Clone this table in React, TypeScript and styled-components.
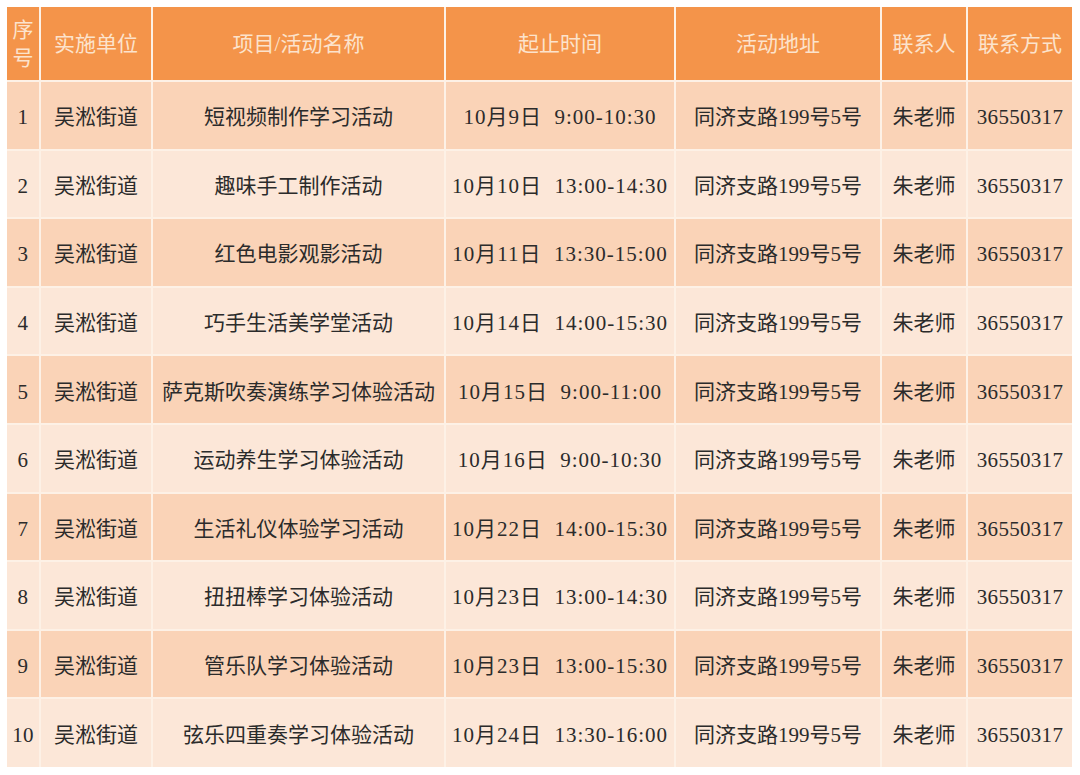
import styled, { createGlobalStyle } from "styled-components"

const rows = [
   ["1", "吴淞街道", "短视频制作学习活动", "10月9日  9:00-10:30"],
   ["2", "吴淞街道", "趣味手工制作活动", "10月10日  13:00-14:30"],
   ["3", "吴淞街道", "红色电影观影活动", "10月11日  13:30-15:00"],
   ["4", "吴淞街道", "巧手生活美学堂活动", "10月14日  14:00-15:30"],
   ["5", "吴淞街道", "萨克斯吹奏演练学习体验活动", "10月15日  9:00-11:00"],
   ["6", "吴淞街道", "运动养生学习体验活动", "10月16日  9:00-10:30"],
   ["7", "吴淞街道", "生活礼仪体验学习活动", "10月22日  14:00-15:30"],
   ["8", "吴淞街道", "扭扭棒学习体验活动", "10月23日  13:00-14:30"],
   ["9", "吴淞街道", "管乐队学习体验活动", "10月23日  13:00-15:30"],
   ["10", "吴淞街道", "弦乐四重奏学习体验活动", "10月24日  13:30-16:00"],
]

const widths = [33, 112, 293, 230, 206, 86, 105]
const headers = ["序号", "实施单位", "项目/活动名称", "起止时间", "活动地址", "联系人", "联系方式"]

export default function App() {
   return (
      <>
         <GlobalStyle/>
         <Page>
            <Table>
               <colgroup>
                  {widths.map((w, i) => <col key={i} style={{ width: w }}/>)}
               </colgroup>
               <thead>
                  <tr>
                     {headers.map(h => <Th key={h}>{h}</Th>)}
                  </tr>
               </thead>
               <tbody>
                  {rows.map((r, i) => (
                     <Row key={r[0]} odd={i % 2 === 0}>
                        <Td latin>{r[0]}</Td>
                        <Td>{r[1]}</Td>
                        <Td>{r[2]}</Td>
                        <Td time>{r[3]}</Td>
                        <Td>同济支路199号5号</Td>
                        <Td>朱老师</Td>
                        <Td latin>36550317</Td>
                     </Row>
                  ))}
               </tbody>
            </Table>
         </Page>
      </>
   )
}

const GlobalStyle = createGlobalStyle`
   body {
      margin: 0;
      background: #ffffff;
      font-family: "Liberation Serif", "Noto Sans CJK SC", serif;
   }
`

const Page = styled.div`
   padding: 7px 8px 7px 7px;
`

const Table = styled.table`
   width: 1065px;
   table-layout: fixed;
   border-collapse: collapse;
`

const Th = styled.th`
   height: 73px;
   padding: 0;
   background: #f4944a;
   color: #fce3cc;
   font-weight: 400;
   font-size: 21px;
   line-height: 28px;
   text-align: center;
   border: 2px solid #fdf1e6;
   border-top: none;
   &:first-child { border-left: none; }
   &:last-child { border-right: none; }
`

const Row = styled.tr<{ odd: boolean }>`
   height: 68.6px;
   background: ${p => p.odd ? "#fad3b7" : "#fce7d8"};
`

const Td = styled.td<{ time?: boolean; latin?: boolean }>`
   padding: ${p => p.latin ? "5px 0 0" : "0"};
   color: #2b2b2b;
   font-size: 21px;
   text-align: center;
   letter-spacing: ${p => p.time ? "1px" : p.latin ? "0.3px" : "0"};
   white-space: ${p => p.time ? "pre" : "nowrap"};
   border: 2px solid #fdf1e6;
   &:first-child { border-left: none; }
   &:last-child { border-right: none; }
   tr:last-child & { border-bottom: none; }
`
